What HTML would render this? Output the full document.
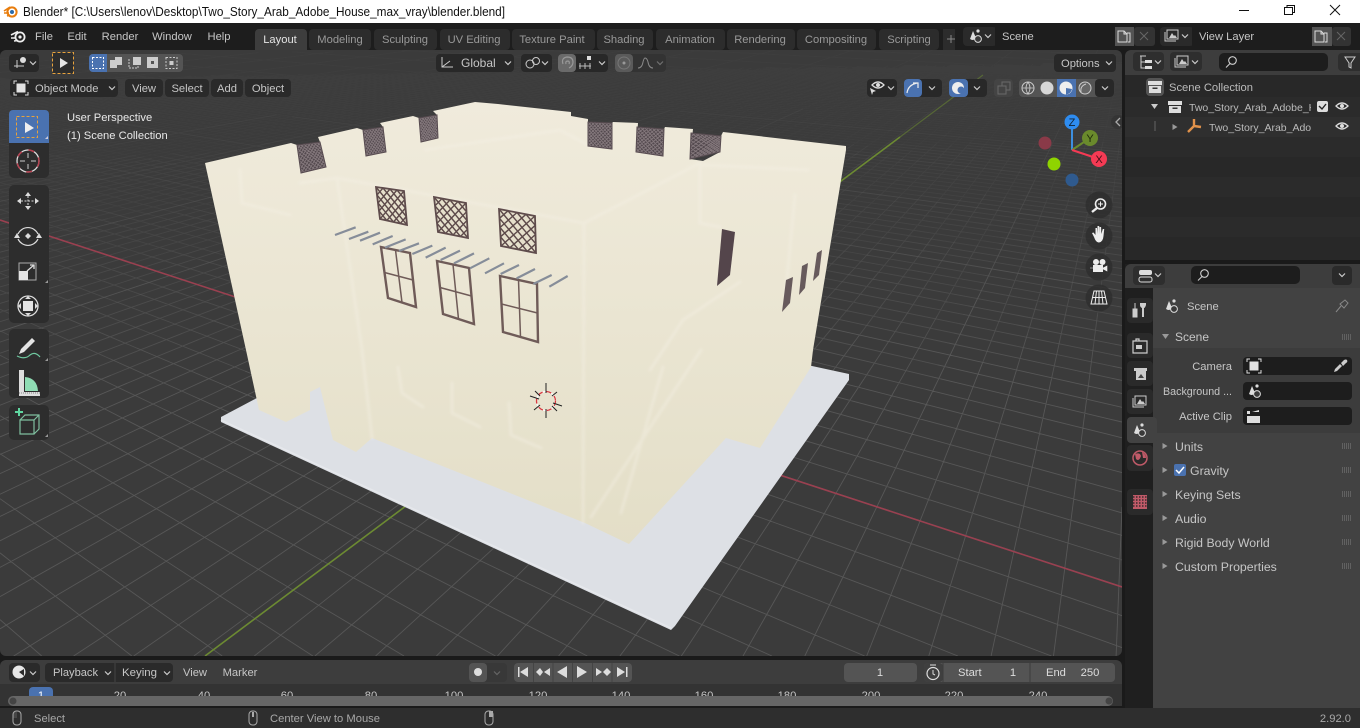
<!DOCTYPE html>
<html><head><meta charset="utf-8"><title>Blender</title>
<style>
html,body{margin:0;padding:0;width:1360px;height:728px;background:#1a1a1a;overflow:hidden}
svg{display:block;position:absolute;left:0;top:0;overflow:hidden}
text{font-family:"Liberation Sans",sans-serif;font-size:11.2px;fill:#c6c6c6}
.p{font-size:12.3px}
.m{text-anchor:middle}.e{text-anchor:end}
.d{fill:#999}
</style></head><body>
<svg width="1360" height="728" viewBox="0 0 1360 728" xmlns="http://www.w3.org/2000/svg">
<defs>
<clipPath id="vp"><rect x="0" y="50" width="1122" height="606" rx="6"/></clipPath>
<clipPath id="ol"><rect x="1125" y="50" width="186" height="210"/></clipPath>
<clipPath id="tl"><rect x="0" y="684" width="1122" height="24"/></clipPath>
<linearGradient id="wall" x1="0" y1="100" x2="0" y2="545" gradientUnits="userSpaceOnUse"><stop offset="0" stop-color="#f0ebdc"/><stop offset=".5" stop-color="#eae5d2"/><stop offset="1" stop-color="#e3dec7"/></linearGradient>
<filter id="bl" x="-10%" y="-10%" width="120%" height="120%"><feGaussianBlur stdDeviation="1.2"/></filter>
<g id="chev"><path d="M-3,-1.5L0,1.5L3,-1.5" fill="none" stroke="#ccc" stroke-width="1.2"/></g>
<g id="sc"><path d="M-6,3L-3,-5L0,2Q-1,4-4,4Z" fill="#ddd"/><circle cx="2" cy="-5" r="1.6" fill="#ddd"/><circle cx="2" cy="3" r="3.4" fill="#3a3a3a" stroke="#ddd" stroke-width="1"/></g>
<g id="vl"><path d="M-5,-6H6V3H-5Z" fill="none" stroke="#ccc"/><path d="M-7,-4V5H4" fill="none" stroke="#ccc"/><path d="M-3,2L0,-3L2,0L3,-1L5,2Z" fill="#ccc"/></g>
<g id="obj"><path d="M-7,-4V-7H-4M4,-7H7V-4M7,4V7H4M-4,7H-7V4" fill="none" stroke="#ddd"/><rect x="-4.5" y="-4.5" width="9" height="9" fill="#e2e2e2"/></g>
<g id="box"><rect x="-7" y="-6" width="14" height="4" fill="#ddd"/><path d="M-6,-1H6V6H-6Z" fill="#ddd"/><rect x="-2.5" y="0.5" width="5" height="1.5" fill="#333"/></g>
<g id="eye"><path d="M-6,0Q0,-6 6,0Q0,6-6,0Z" fill="none" stroke="#ddd" stroke-width="1.3"/><circle r="2" fill="#ddd"/></g>
<g id="srch"><circle cx="1.5" cy="-1.5" r="3.8" fill="none" stroke="#ccc" stroke-width="1.1"/><path d="M-1,1.5L-5,5.5" stroke="#ccc" stroke-width="1.1"/></g>
<g id="tri"><path d="M-2.5,-3L2.5,0L-2.5,3Z" fill="#999"/></g>
<g id="grip"><path d="M0,-2h9M0,0h9M0,2h9" stroke="#808080" stroke-width="1" stroke-dasharray="1 1"/></g>
<g id="mouse"><rect x="-4" y="-7" width="8" height="14" rx="3.5" fill="none" stroke="#aaa"/></g>
<g id="copy"><path d="M-6,-5h6l3,3v8h-9zM0,-5v3h3M3,-3h3v9h-2" fill="none" stroke="#ddd"/></g>
</defs>

<rect width="1360" height="728" fill="#1a1a1a"/>
<!-- title bar -->
<rect width="1360" height="23" fill="#fff"/>
<g transform="translate(11,12)"><circle cx="1" r="4.6" fill="none" stroke="#e87d0d" stroke-width="2"/><circle cx="1" r="2" fill="#2b6bab"/><path d="M-7,-1L-1,-5M-7,1H-2M-4,4L-1,3" stroke="#e87d0d" stroke-width="1.6"/></g>
<text x="23" y="16" style="fill:#111;font-size:12.5px" textLength="482" lengthAdjust="spacingAndGlyphs">Blender* [C:\Users\lenov\Desktop\Two_Story_Arab_Adobe_House_max_vray\blender.blend]</text>
<path d="M1239,10.5H1249" stroke="#111"/>
<path d="M1284.5,7.5H1292.5V14.5H1284.5ZM1287,7.5V5.5H1294.5V12.5H1292.5" fill="none" stroke="#111"/>
<path d="M1330,5L1340,15M1340,5L1330,15" stroke="#111"/>

<!-- top bar -->
<rect y="23" width="1360" height="27" fill="#1d1d1d"/>
<g transform="translate(19,37)"><circle cx="1" r="4.6" fill="none" stroke="#eee" stroke-width="1.8"/><circle cx="1" r="1.6" fill="#eee"/><path d="M-8,-2L-1,-5.5M-8,1H-3M-5,4L-1,3.5" stroke="#eee" stroke-width="1.6"/></g>
<text x="44" y="40" class="m">File</text><text x="77" y="40" class="m">Edit</text><text x="120" y="40" class="m">Render</text><text x="172" y="40" class="m">Window</text><text x="219" y="40" class="m">Help</text>
<path d="M255,33a4,4 0 0 1 4,-4h44a4,4 0 0 1 4,4v17h-52z" fill="#3d3d3d"/>
<g fill="#2c2c2c">
<rect x="309" y="29" width="62" height="21" rx="4"/><rect x="374" y="29" width="63" height="21" rx="4"/><rect x="440" y="29" width="70" height="21" rx="4"/><rect x="512" y="29" width="83" height="21" rx="4"/><rect x="597" y="29" width="56" height="21" rx="4"/><rect x="656" y="29" width="69" height="21" rx="4"/><rect x="727" y="29" width="68" height="21" rx="4"/><rect x="797" y="29" width="79" height="21" rx="4"/><rect x="879" y="29" width="60" height="21" rx="4"/><rect x="943" y="29" width="12" height="21"/>
</g>
<text x="280" y="43" class="m" style="fill:#e4e4e4">Layout</text>
<text x="340" y="43" class="m d">Modeling</text><text x="405" y="43" class="m d">Sculpting</text><text x="474" y="43" class="m d">UV Editing</text><text x="552" y="43" class="m d">Texture Paint</text><text x="624" y="43" class="m d">Shading</text><text x="690" y="43" class="m d">Animation</text><text x="760" y="43" class="m d">Rendering</text><text x="836" y="43" class="m d">Compositing</text><text x="909" y="43" class="m d">Scripting</text>
<path d="M947,39h8M951,35v8" stroke="#888"/>
<!-- scene selector -->
<rect x="963" y="27" width="34" height="19" rx="4" fill="#2a2a2a"/><use href="#sc" x="976" y="36"/><use href="#chev" x="988" y="36"/>
<rect x="995" y="27" width="120" height="19" fill="#1d1d1d"/><text x="1002" y="40">Scene</text>
<rect x="1115" y="27" width="19" height="19" fill="#545454"/><rect x="1134" y="27" width="21" height="19" rx="3" fill="#333"/>
<use href="#copy" x="1124" y="36"/><path d="M1140,32l8,8m0,-8l-8,8" stroke="#666"/>
<rect x="1160" y="27" width="34" height="19" rx="4" fill="#2a2a2a"/><use href="#vl" x="1172" y="36"/><use href="#chev" x="1185" y="36"/>
<rect x="1192" y="27" width="120" height="19" fill="#1d1d1d"/><text x="1199" y="40">View Layer</text>
<rect x="1312" y="27" width="20" height="19" fill="#545454"/><rect x="1332" y="27" width="19" height="19" rx="3" fill="#333"/>
<use href="#copy" x="1321" y="36"/><path d="M1337,32l8,8m0,-8l-8,8" stroke="#666"/>

<!-- viewport -->
<g clip-path="url(#vp)">
<rect x="0" y="50" width="1122" height="606" fill="#3b3b3b"/>
<g id="grid" fill="none" stroke="#575757" stroke-width=".9"></g>
<path d="M0,220L1122,587" stroke="#9a4050" stroke-width="1.6"/>
<path d="M205,656L900,137" stroke="#6c8a32" stroke-width="1.6"/><path d="M900,137L983,75" stroke="#6c8a32" stroke-width="1.2" opacity=".55"/>
<!-- plate -->
<path d="M221,417L221,422L671,630L675,626L849,380L849,374L812,366L400,300L257,398Z" fill="#dde0e5"/>
<path d="M221,420L671,628" stroke="#e6e8ec" stroke-width="1.5"/>
<!-- house -->
<path id="hs" fill="url(#wall)" d="M205,163L291,143L297,145L301,173L326,167L320,142L318,137L357,128L363,130L366,156L386,152L383,127L380,123L413,116L419,118L421,142L438,138L437,115L433,111L475,102L498,104L571,112L571,116L588,119L588,146L612,149L612,123L613,122L638,123L636,152L663,156L664,129L665,127L693,129L690,159L703,161L720,152L721,136L723,132L846,146L846,150L813,350L811,367L760,448L726,438L629,544L585,523L372,438L356,452L333,440L320,387L310,392L310,410L286,422L259,410L246,350Z"/>
<g fill="none" stroke="#f5f1e6" stroke-width="3" stroke-linecap="round" filter="url(#bl)" opacity=".4">
<path d="M240,170L242,203L290,215"/><path d="M300,183L337,178L584,223"/><path d="M337,178L362,350L372,438"/>
<path d="M584,223L583,523"/><path d="M584,223L700,163"/><path d="M700,163L700,223L720,227"/><path d="M703,165L808,170"/>
<path d="M398,367L402,393L423,407"/><path d="M452,383L452,413L480,427"/><path d="M509,403L511,435L541,448"/>
<path d="M701,350L591,517"/><path d="M663,367L621,513"/><path d="M740,282L683,320L650,370"/><path d="M795,195L785,300"/>
<path d="M425,150L560,130L590,146"/>
</g>
<g id="detail"></g>
<!-- right windows -->
<path d="M722,229L735,232L730,275L717,286Z" fill="#54454b"/>
<path d="M786,280L793,277L790,303L782,312Z" fill="#675a5c"/><path d="M802,266L808,263L805,288L799,295Z" fill="#675a5c"/><path d="M817,253L822,250L819,275L813,281Z" fill="#675a5c"/>
<!-- 3d cursor -->
<circle cx="546" cy="401" r="9.5" fill="none" stroke="#fff" stroke-width="1.2"/>
<circle cx="546" cy="401" r="9.5" fill="none" stroke="#d8383f" stroke-width="1.3" stroke-dasharray="5 4"/>
<path d="M546,383V393M546,409V418M530,396L539,399M553,403L562,406M535,391L540,396M552,406L557,411M534,410L540,405M552,396L557,392" stroke="#222" stroke-width="1"/>
<!-- gizmo -->
<circle cx="1045" cy="143" r="6.5" fill="#8a3a48"/><circle cx="1054" cy="164" r="6.5" fill="#8fd400"/><circle cx="1072" cy="180" r="6.5" fill="#2f5a8e"/>
<path d="M1072,150V125" stroke="#3d8fe0" stroke-width="2"/><path d="M1072,150L1090,138" stroke="#6a8a2c" stroke-width="2"/><path d="M1072,150L1099,159" stroke="#f53a54" stroke-width="2"/>
<circle cx="1072" cy="122" r="7.5" fill="#2e8cf0"/><circle cx="1090" cy="138" r="8" fill="#6a8a2c"/><circle cx="1099" cy="159" r="8" fill="#f53a54"/>
<text x="1072" y="126" class="m" style="fill:#123;font-size:11px">Z</text><text x="1090" y="142" class="m" style="fill:#1d2a08;font-size:11px">Y</text><text x="1099" y="163" class="m" style="fill:#401018;font-size:11px">X</text>
<!-- nav -->
<g fill="#2f2f2f" opacity=".85"><circle cx="1099" cy="205" r="13.5"/><circle cx="1099" cy="236" r="13.5"/><circle cx="1099" cy="267" r="13.5"/><circle cx="1099" cy="298" r="13.5"/></g>
<circle cx="1100.5" cy="204" r="5" fill="none" stroke="#eee" stroke-width="1.6"/><path d="M1097,208L1092,212" stroke="#eee" stroke-width="2.4"/><path d="M1098,204h5M1100.5,201.500v5" stroke="#eee"/>
<path d="M1094,237l-2,-4l1.500,-.5l2,2.500v-7h1.500l.5,6v-8h1.700l.3,8v-7h1.600l.2,7l1.500,-5h1.400l-.7,7q-.5,6 -4.500,6.500q-3,.3 -5,-5.500z" fill="#eee"/>
<circle cx="1096" cy="262" r="3" fill="#eee"/><circle cx="1102.500" cy="262" r="3" fill="#eee"/><rect x="1093" y="265" width="10" height="7" fill="#eee"/><path d="M1103,268l4,-2v5l-4,-2zM1093,268h-3" fill="#eee" stroke="#eee" stroke-width=".6"/>
<path d="M1094,291H1104L1107,304H1091ZM1099,291V304M1092.500,297.500H1105.500M1096.500,291L1095,304M1101.500,291L1103,304" fill="none" stroke="#eee"/>
<circle cx="1118" cy="122" r="7" fill="#333" opacity=".8"/><path d="M1120,118L1116,122L1120,126" fill="none" stroke="#aaa" stroke-width="1.3"/>
<!-- header row 1 -->
<rect x="9" y="54" width="30" height="18" rx="4" fill="#282828"/>
<path d="M14,66h10M17,60v8" stroke="#ccc"/><circle cx="23" cy="60" r="3" fill="#ddd"/><use href="#chev" x="33" y="63"/>
<rect x="52.500" y="52.500" width="21" height="21" fill="#2d2d2d" stroke="#e8a33d" stroke-dasharray="3 2"/><path d="M60,58L68,63L60,68Z" fill="#e6e6e6"/>
<rect x="89" y="54" width="94" height="18" rx="4" fill="#545454"/><path d="M93,54h14v18h-14a4,4 0 0 1 -4,-4v-10a4,4 0 0 1 4,-4z" fill="#4a72b0"/>
<rect x="92.500" y="57.500" width="11" height="11" fill="none" stroke="#fff" stroke-dasharray="2 1.500"/>
<path d="M110,60h5v-3h7v8h-5v3h-7z" fill="#ccc"/>
<path d="M129,59v9h9v-9" fill="none" stroke="#ccc" stroke-dasharray="2 1"/><rect x="133" y="57" width="8" height="8" fill="#ccc"/>
<path d="M147,57h11v11h-11zM151,61v3h3v-3z" fill="#ccc" fill-rule="evenodd"/>
<rect x="166" y="57.500" width="11" height="11" fill="none" stroke="#ccc" stroke-dasharray="2 1.500"/><rect x="169.500" y="61" width="4" height="4" fill="#ccc"/>
<rect x="436" y="54" width="78" height="18" rx="4" fill="#282828"/><path d="M442,57V67H453M442,67L450,61" fill="none" stroke="#ccc"/><text x="461" y="67" style="font-size:12px">Global</text><use href="#chev" x="508" y="63"/>
<rect x="521" y="54" width="31" height="18" rx="4" fill="#282828"/><circle cx="530" cy="64" r="4" fill="none" stroke="#ccc"/><circle cx="536" cy="61" r="3.5" fill="none" stroke="#ccc"/><use href="#chev" x="545" y="63"/>
<rect x="558" y="54" width="50" height="18" rx="4" fill="#282828"/><rect x="558" y="54" width="18" height="18" rx="4" fill="#6a6a6a"/>
<path d="M563,64q-2,-6 4,-7q6,0 6,5q0,4 -4,6M566,64q-1,-3 2,-3q2,.5 1,3" fill="none" stroke="#999" stroke-width="1.200"/>
<path d="M579,66h12M580,63v6M585,63v6M590,63v6" stroke="#bbb"/><rect x="587" y="56" width="4" height="4" fill="#ddd"/><use href="#chev" x="602" y="63"/>
<rect x="615" y="54" width="51" height="18" rx="4" fill="#333"/><rect x="615" y="54" width="18" height="18" rx="4" fill="#5a5a5a"/><circle cx="624" cy="63" r="6" fill="none" stroke="#777"/><circle cx="624" cy="63" r="1.500" fill="#999"/><path d="M638,68q4,0 5,-6q1,-4 2,-4q2,0 3,4q1,6 5,6" fill="none" stroke="#888"/><use href="#chev" x="660" y="63" opacity=".4"/>
<rect x="1054" y="54" width="62" height="18" rx="4" fill="#282828"/><text x="1061" y="67">Options</text><use href="#chev" x="1109" y="63"/>
<!-- header row 2 -->
<rect x="10" y="79" width="108" height="18" rx="4" fill="#282828"/><use href="#obj" x="21" y="88"/><text x="35" y="92">Object Mode</text><use href="#chev" x="112" y="88"/>
<rect x="125" y="79" width="38" height="18" rx="4" fill="#2a2a2a"/><text x="144" y="92" class="m">View</text>
<rect x="165" y="79" width="44" height="18" rx="4" fill="#2a2a2a"/><text x="187" y="92" class="m">Select</text>
<rect x="211" y="79" width="32" height="18" rx="4" fill="#2a2a2a"/><text x="227" y="92" class="m">Add</text>
<rect x="245" y="79" width="46" height="18" rx="4" fill="#2a2a2a"/><text x="268" y="92" class="m">Object</text>
<rect x="867" y="79" width="30" height="18" rx="4" fill="#282828"/><use href="#eye" x="878" y="85"/><path d="M870,88l6,3l-3,1l-1,3z" fill="#ddd"/><use href="#chev" x="891" y="88"/>
<rect x="904" y="79" width="38" height="18" rx="4" fill="#282828"/><rect x="904" y="79" width="18" height="18" rx="4" fill="#4a72b0"/><path d="M907,93q1,-8 10,-10M913,83h5v5" fill="none" stroke="#eee" stroke-width="1.200"/><use href="#chev" x="932" y="88"/>
<rect x="949" y="79" width="38" height="18" rx="4" fill="#282828"/><rect x="949" y="79" width="19" height="18" rx="4" fill="#4a72b0"/><circle cx="958" cy="88" r="6" fill="#eee"/><circle cx="961" cy="90" r="3.500" fill="#4a72b0"/><use href="#chev" x="977" y="88"/>
<rect x="994" y="79" width="19" height="18" rx="4" fill="#444"/><path d="M998,86h8v8h-8zM1002,86v-4h8v8h-4" fill="none" stroke="#6a6a6a"/>
<rect x="1019" y="79" width="95" height="18" rx="4" fill="#545454"/><rect x="1057" y="79" width="19" height="18" fill="#4a72b0"/><rect x="1095" y="79" width="19" height="18" rx="4" fill="#282828"/>
<circle cx="1028" cy="88" r="6" fill="none" stroke="#ccc"/><path d="M1022,88h12M1028,82q-4,6 0,12q4,-6 0,-12" fill="none" stroke="#ccc" stroke-width=".8"/>
<circle cx="1047" cy="88" r="6.500" fill="#d6d6d6"/>
<circle cx="1066" cy="88" r="6.500" fill="#eee"/><path d="M1066,88l6,1a6.500,6.500 0 0 1 -6,5.500z" fill="#4a72b0"/>
<circle cx="1085" cy="88" r="6" fill="#666" stroke="#ccc"/><path d="M1081,92q-1,-6 5,-8" fill="none" stroke="#ccc"/><use href="#chev" x="1105" y="88"/>
<!-- tool panel -->
<rect x="9" y="110" width="40" height="68" rx="5" fill="#2d2d2d"/><rect x="9" y="185" width="40" height="138" rx="5" fill="#2d2d2d"/><rect x="9" y="329" width="40" height="69" rx="5" fill="#2d2d2d"/><rect x="9" y="405" width="40" height="35" rx="5" fill="#2d2d2d"/>
<path d="M13,110h32a4,4 0 0 1 4,4v29h-40v-29a4,4 0 0 1 4,-4z" fill="#4a72b0"/>
<rect x="16.500" y="116.500" width="21" height="21" fill="none" stroke="#e8a33d" stroke-dasharray="3 2"/><path d="M25,122L34,128L25,133Z" fill="#eee"/><path d="M45,139l3,0v-3z" fill="#ccd"/>
<circle cx="28" cy="161" r="11" fill="none" stroke="#ddd" stroke-width="1.300"/><circle cx="28" cy="161" r="11" fill="none" stroke="#b84050" stroke-width="1.400" stroke-dasharray="6 7"/><path d="M28,153v5M28,164v5M20,161h5M31,161h5" stroke="#ccc"/>
<path d="M28,192l3,4h-6zM28,210l3,-4h-6zM17,201l4,-3v6zM39,201l-4,-3v6z" fill="#ddd"/><path d="M28,196v10M21,201h14" stroke="#ddd" stroke-dasharray="2 1.500"/>
<path d="M18,234a11,11 0 0 1 20,0M18,239a11,11 0 0 0 20,0" fill="none" stroke="#ddd" stroke-width="1.200"/><path d="M28,233l3,3l-3,3l-3,-3zM17,233l3,5h-6zM39,233l3,5h-6z" fill="#ddd"/>
<rect x="19" y="263" width="17" height="17" fill="none" stroke="#aaa"/><rect x="19" y="271" width="9" height="9" fill="#e4e4e4"/><path d="M27,271l7,-6M30,265h4v4" fill="none" stroke="#ddd" stroke-width="1.300"/><path d="M45,283l3,0v-3z" fill="#999"/>
<circle cx="28" cy="306" r="10" fill="none" stroke="#ddd" stroke-width="1.300"/><rect x="23" y="301" width="10" height="10" fill="#e4e4e4"/><path d="M28,296l3,3h-6zM28,316l3,-3h-6zM18,306l3,-3v6zM38,306l-3,-3v6z" fill="#ddd"/>
<path d="M21,349l11,-11l3,3l-11,11l-5,2z" fill="#e4e4e4"/><path d="M17,356q8,4 13,-1q5,-4 10,2" fill="none" stroke="#6fc9a0" stroke-width="1.200"/><path d="M45,361l3,0v-3z" fill="#999"/>
<path d="M19,370h5v22h16v4h-21z" fill="#ddd"/><path d="M25,391v-14q12,1 13,14z" fill="#8fdcb4"/><path d="M19,393h21" stroke="#888" stroke-dasharray="1 1"/>
<path d="M20,420h14v14h-14zM20,420l5,-5h14v14l-5,5M34,420l5,-5" fill="none" stroke="#7fbf9f" stroke-width="1.200"/><path d="M15,412h8M19,408v8" stroke="#5fd6a0" stroke-width="2"/><path d="M45,437l3,0v-3z" fill="#999"/>
<text x="67" y="121" style="fill:#e8e8e8">User Perspective</text><text x="67" y="139" style="fill:#e8e8e8">(1) Scene Collection</text>
</g>

<!-- outliner -->
<path d="M1125,56a6,6 0 0 1 6,-6H1360V75H1125Z" fill="#3d3d3d"/>
<rect x="1125" y="75" width="235" height="185" fill="#282828"/>
<g fill="#2b2b2b"><rect x="1125" y="97" width="235" height="20"/><rect x="1125" y="137" width="235" height="20"/><rect x="1125" y="177" width="235" height="20"/><rect x="1125" y="217" width="235" height="20"/></g>
<rect x="1125" y="117" width="235" height="20" fill="#2f2f2f"/>
<rect x="1133" y="52" width="31" height="19" rx="4" fill="#2e2e2e"/><path d="M1140,56h6M1141,56v12h4M1141,62h4" fill="none" stroke="#ccc"/><rect x="1145" y="60" width="7" height="3" fill="#ddd"/><rect x="1145" y="66" width="7" height="3" fill="#ddd"/><use href="#chev" x="1158" y="62"/>
<rect x="1170" y="52" width="32" height="19" rx="4" fill="#2e2e2e"/><use href="#vl" x="1182" y="62"/><use href="#chev" x="1195" y="62"/>
<rect x="1219" y="53" width="109" height="18" rx="5" fill="#1d1d1d"/><use href="#srch" x="1231" y="62"/>
<path d="M1338,57a4,4 0 0 1 4,-4h18v18h-18a4,4 0 0 1 -4,-4z" fill="#2e2e2e"/><path d="M1345,57h10l-4,6v5l-2,-1v-4z" fill="none" stroke="#ccc"/>
<rect x="1146" y="78" width="18" height="18" rx="4" fill="#545454"/><use href="#box" x="1155" y="87"/>
<text x="1169" y="91" style="fill:#bbb">Scene Collection</text>
<path d="M1151,104h7l-3.500,5z" fill="#ccc"/><use href="#box" x="1175" y="107"/>
<g clip-path="url(#ol)"><text x="1189" y="111" style="fill:#bbb;font-size:10.5px">Two_Story_Arab_Adobe_House</text><text x="1209" y="131" style="fill:#bbb;font-size:10.5px">Two_Story_Arab_Adobe_House</text></g>
<rect x="1317" y="101" width="11" height="11" rx="2" fill="#ddd"/><path d="M1319,106l3,3l4,-5" fill="none" stroke="#222" stroke-width="1.400"/>
<use href="#eye" x="1342" y="106"/><use href="#eye" x="1342" y="126"/>
<path d="M1155,121v10" stroke="#666"/><use href="#tri" x="1175" y="127"/>
<path d="M1194,119v7l-6,6M1194,126l7,1" fill="none" stroke="#e0914a" stroke-width="2.400"/>

<!-- properties -->
<rect x="1125" y="264" width="235" height="444" fill="#1f1f1f"/>
<path d="M1125,270a6,6 0 0 1 6,-6H1360V288H1125Z" fill="#3d3d3d"/>
<rect x="1153" y="288" width="207" height="420" fill="#424242"/>
<rect x="1153" y="348" width="207" height="85" fill="#3c3c3c"/>
<rect x="1133" y="266" width="32" height="19" rx="4" fill="#2e2e2e"/><rect x="1139" y="270" width="13" height="5" rx="2" fill="#ddd"/><rect x="1139" y="277" width="13" height="5" rx="2" fill="none" stroke="#ddd"/><use href="#chev" x="1158" y="275"/>
<rect x="1191" y="266" width="109" height="18" rx="5" fill="#1d1d1d"/><use href="#srch" x="1203" y="275"/>
<rect x="1332" y="266" width="20" height="19" rx="4" fill="#2a2a2a"/><use href="#chev" x="1342" y="275"/>
<!-- tabs -->
<g fill="#2a2a2a"><rect x="1127" y="298" width="26" height="25" rx="4"/><rect x="1127" y="333" width="26" height="25" rx="4"/><rect x="1127" y="361" width="26" height="25" rx="4"/><rect x="1127" y="389" width="26" height="25" rx="4"/><rect x="1127" y="445" width="26" height="26" rx="4"/><rect x="1127" y="489" width="26" height="26" rx="4"/></g>
<rect x="1127" y="417" width="30" height="26" rx="4" fill="#424242"/>
<path d="M1135,303v6M1133,309h4v8h-4z" fill="#ccc" stroke="#ccc" stroke-width="1"/><path d="M1146,303v2q-1,3 -2,3v9h-2v-9q-2,-1 -2,-3v-2" fill="#ccc"/>
<path d="M1133,341h14v12h-14zM1136,341v-2h3v2" fill="none" stroke="#ccc" stroke-width="1.200"/><rect x="1136" y="345" width="6" height="4" fill="#ccc"/>
<path d="M1134,368h13v3h-13zM1136,371h10v9h-10z" fill="#ccc"/><path d="M1138,378l3,-4l3,4z" fill="#444"/>
<use href="#vl" x="1140" y="402"/><use href="#sc" x="1140" y="430"/>
<circle cx="1140" cy="458" r="7" fill="none" stroke="#c05a68" stroke-width="1.500"/><path d="M1135,454q5,-2 6,2q-2,6 -5,3zM1142,452q4,2 4,6l-3,0z" fill="#c05a68"/>
<rect x="1133" y="495" width="14" height="14" fill="#c05a68"/><path d="M1133,497h14M1133,500h14M1133,503h14M1133,506h14" stroke="#3a2a2d" stroke-width="1.500" stroke-dasharray="1.500 1.500"/>
<use href="#sc" x="1172" y="306"/><text x="1187" y="310">Scene</text>
<path d="M1340,304l5,-4l3,3l-4,5zM1341,306l-5,6" fill="none" stroke="#888"/>
<path d="M1162,334h7l-3.500,5z" fill="#999"/><text x="1175" y="341" style="font-size:12px">Scene</text><use href="#grip" x="1342" y="337"/>
<text x="1232" y="370" class="e">Camera</text><text x="1232" y="395" class="e" textLength="69" lengthAdjust="spacingAndGlyphs">Background ...</text><text x="1232" y="420" class="e">Active Clip</text>
<rect x="1243" y="357" width="109" height="18" rx="4" fill="#1d1d1d"/><rect x="1243" y="382" width="109" height="18" rx="4" fill="#1d1d1d"/><rect x="1243" y="407" width="109" height="18" rx="4" fill="#1d1d1d"/>
<use href="#obj" x="1254" y="366"/><path d="M1334,372l1,-3l5,-5l2,2l-5,5zM1341,363l3,-3q2,-1 3,0q1,2 -1,3l-3,3z" fill="#ccc"/>
<use href="#sc" x="1255" y="391"/>
<rect x="1247" y="416" width="13" height="7" fill="#ddd"/><path d="M1247,411v3h3v-3zM1252,412l7,-2v2h-7z" fill="#ddd"/>
<use href="#tri" x="1165" y="446"/><use href="#tri" x="1165" y="470"/><use href="#tri" x="1165" y="494"/><use href="#tri" x="1165" y="518"/><use href="#tri" x="1165" y="542"/><use href="#tri" x="1165" y="566"/>
<text x="1175" y="451" class="p">Units</text>
<rect x="1174" y="464" width="12" height="12" rx="2" fill="#4a72b0"/><path d="M1176,470l3,3l5,-6" fill="none" stroke="#fff" stroke-width="1.500"/><text x="1190" y="475" class="p">Gravity</text>
<text x="1175" y="499" class="p">Keying Sets</text><text x="1175" y="523" class="p">Audio</text><text x="1175" y="547" class="p">Rigid Body World</text><text x="1175" y="571" class="p">Custom Properties</text>
<use href="#grip" x="1342" y="446"/><use href="#grip" x="1342" y="470"/><use href="#grip" x="1342" y="494"/><use href="#grip" x="1342" y="518"/><use href="#grip" x="1342" y="542"/><use href="#grip" x="1342" y="566"/>

<!-- timeline -->
<path d="M0,666a6,6 0 0 1 6,-6H1116a6,6 0 0 1 6,6V684H0Z" fill="#3d3d3d"/>
<rect y="684" width="1122" height="24" fill="#333"/>
<rect x="9" y="663" width="31" height="19" rx="4" fill="#2a2a2a"/><circle cx="19" cy="672" r="6.500" fill="#e6e6e6"/><path d="M19,672l5,-3v7z" fill="#2a2a2a"/><use href="#chev" x="33" y="673"/>
<rect x="45" y="663" width="128" height="19" rx="4" fill="#2a2a2a"/><path d="M115,663v19" stroke="#444"/>
<text x="53" y="676" textLength="45" lengthAdjust="spacingAndGlyphs">Playback</text><use href="#chev" x="108" y="673"/>
<text x="122" y="676" textLength="35" lengthAdjust="spacingAndGlyphs">Keying</text><use href="#chev" x="167" y="673"/>
<text x="195" y="676" class="m">View</text><text x="240" y="676" class="m">Marker</text>
<rect x="469" y="663" width="38" height="19" rx="4" fill="#383838"/><rect x="469" y="663" width="18" height="19" rx="4" fill="#545454"/><circle cx="478" cy="672" r="4" fill="#ddd"/><use href="#chev" x="497" y="673" opacity=".3"/>
<rect x="514" y="663" width="118" height="19" rx="4" fill="#545454"/>
<path d="M533.500,663v19M553,663v19M572.500,663v19M592.500,663v19M612,663v19" stroke="#444"/>
<path d="M518,667v10h1.500v-10zM528,667l-8,5l8,5z" fill="#ddd"/>
<path d="M536,672l4,-4l3,4l-3,4zM544,672l6,-4v8z" fill="#ddd"/>
<path d="M567,666v12l-10,-6z" fill="#ddd"/><path d="M577,666v12l10,-6z" fill="#ddd"/>
<path d="M596,668v8l6,-4zM603,672l4,-4l4,4l-4,4z" fill="#ddd"/>
<path d="M617,667l8,5l-8,5zM626,667h1.500v10h-1.500z" fill="#ddd"/>
<rect x="844" y="663" width="73" height="19" rx="4" fill="#545454"/><text x="880" y="676" class="m" style="fill:#ddd">1</text>
<rect x="924" y="663" width="191" height="19" rx="4" fill="#545454"/><rect x="924" y="663" width="19" height="19" rx="4" fill="#3f3f3f"/>
<path d="M1030,663v19M943,663v19" stroke="#3d3d3d"/>
<circle cx="933" cy="673.500" r="6" fill="none" stroke="#ddd" stroke-width="1.200"/><path d="M930,665h6M933,670v4l2,1" fill="none" stroke="#ddd"/>
<text x="958" y="676" style="fill:#ddd">Start</text><text x="1013" y="676" class="m" style="fill:#ddd">1</text>
<text x="1046" y="676" style="fill:#ddd">End</text><text x="1090" y="676" class="m" style="fill:#ddd">250</text>
<rect x="29" y="687" width="24" height="14" rx="4" fill="#4a72b0"/>
<g clip-path="url(#tl)">
<text x="41" y="699" class="m" style="fill:#fff">1</text>
<text x="120" y="699" class="m">20</text><text x="204" y="699" class="m">40</text><text x="287" y="699" class="m">60</text><text x="371" y="699" class="m">80</text><text x="454" y="699" class="m">100</text><text x="538" y="699" class="m">120</text><text x="621" y="699" class="m">140</text><text x="704" y="699" class="m">160</text><text x="787" y="699" class="m">180</text><text x="871" y="699" class="m">200</text><text x="954" y="699" class="m">220</text><text x="1038" y="699" class="m">240</text>
</g>
<rect x="8" y="696" width="1105" height="10" rx="5" fill="#666"/><circle cx="13" cy="701" r="3.500" fill="#444"/><circle cx="1109" cy="701" r="3.500" fill="#444"/>
<rect y="706" width="1122" height="2" fill="#1a1a1a"/>

<!-- status bar -->
<rect y="708" width="1360" height="20" fill="#2e2e2e"/>
<use href="#mouse" x="17" y="718"/><path d="M13,712h4v6h-4z" fill="#aaa" opacity=".2"/>
<text x="34" y="722" style="fill:#a8a8a8" textLength="31" lengthAdjust="spacingAndGlyphs">Select</text>
<use href="#mouse" x="253" y="718"/><rect x="252" y="712" width="2" height="5" fill="#aaa"/>
<text x="270" y="722" style="fill:#a8a8a8" textLength="110" lengthAdjust="spacingAndGlyphs">Center View to Mouse</text>
<use href="#mouse" x="489" y="718"/><path d="M489,711h4v6h-4z" fill="#aaa"/>
<text x="1351" y="722" class="e" style="fill:#a8a8a8">2.92.0</text>
</svg>
<script>
(function(){
var NS="http://www.w3.org/2000/svg";
function el(n,a,p){var e=document.createElementNS(NS,n);for(var k in a)e.setAttribute(k,a[k]);p.appendChild(e);return e;}
/* ground grid */
var O=[548,399],Vx=[-731,-19],Vy=[1144,-46],al=.0208,be=.03,s0=-.2046;
function P(s,t){var w=1+s+t;return [(s*Vx[0]+t*Vy[0]+O[0])/w,(s*Vx[1]+t*Vy[1]+O[1])/w,w];}
var buckets={};
/* clip a segment to the viewport so no geometry leaves the frame */
function clip(a,b){
 var t0=0,t1=1,dx=b[0]-a[0],dy=b[1]-a[1];
 var pp=[-dx,dx,-dy,dy],qq=[a[0],1122-a[0],a[1]-50,656-a[1]];
 for(var i=0;i<4;i++){
  if(pp[i]==0){if(qq[i]<0)return null;continue;}
  var r=qq[i]/pp[i];
  if(pp[i]<0){if(r>t1)return null;if(r>t0)t0=r;}
  else{if(r<t0)return null;if(r<t1)t1=r;}
 }
 return [[a[0]+t0*dx,a[1]+t0*dy],[a[0]+t1*dx,a[1]+t1*dy]];
}
function seg(a,b,op){
 var q=Math.round(Math.min(1,op)*8);if(q<1)return;
 var c=clip(a,b);if(!c)return;
 (buckets[q]=buckets[q]||[]).push("M"+c[0][0].toFixed(1)+","+c[0][1].toFixed(1)+"L"+c[1][0].toFixed(1)+","+c[1][1].toFixed(1));
}
function line(fn,major){
 var prev=null;
 for(var p=-1.2;p<7;p+=.1){
  var c=fn(p);
  if(c[2]<.12){prev=null;continue;}
  if(prev){var w=(c[2]+prev[2])/2;var op=1/(w*w);if(major)op*=1.6;seg(prev,c,op);}
  prev=c;
 }
}
var i,v;
for(i=-60;i<340;i++){v=s0+al*i;if(v<-1.1)continue;(function(v,i){line(function(p){return P(v,p);},i%10==0);})(v,i);}
for(i=-40;i<240;i++){v=be*i;(function(v,i){line(function(p){return P(p,v);},i%10==0);})(v,i);}
var g=document.getElementById("grid");
for(var q in buckets){el("path",{d:buckets[q].join(""),opacity:q/8},g);}

/* lattice helpers */
var det=document.getElementById("detail");
function bi(Q,u,v){var a=[Q[0][0]+(Q[1][0]-Q[0][0])*u,Q[0][1]+(Q[1][1]-Q[0][1])*u],b=[Q[3][0]+(Q[2][0]-Q[3][0])*u,Q[3][1]+(Q[2][1]-Q[3][1])*u];return [a[0]+(b[0]-a[0])*v,a[1]+(b[1]-a[1])*v];}
function pts(Q){return Q.map(function(p){return p.join(",")}).join(" ");}
function lattice(Q,n,col,w,fr,fw,parent){
 var d="",k,a,b;
 for(k=-n;k<=n;k++){
  var u0=k/n,u1=u0+1;
  var a1=Math.max(0,u0),b1=Math.min(1,u1);
  if(b1<=a1)continue;
  a=bi(Q,a1,a1-u0);b=bi(Q,b1,b1-u0);d+="M"+a[0].toFixed(1)+","+a[1].toFixed(1)+"L"+b[0].toFixed(1)+","+b[1].toFixed(1);
  a=bi(Q,a1,1-(a1-u0));b=bi(Q,b1,1-(b1-u0));d+="M"+a[0].toFixed(1)+","+a[1].toFixed(1)+"L"+b[0].toFixed(1)+","+b[1].toFixed(1);
 }
 el("path",{d:d,stroke:col,"stroke-width":w,fill:"none"},parent);
 el("polygon",{points:pts(Q),fill:"none",stroke:fr,"stroke-width":fw},parent);
}
/* notch windows */
[[[297,145],[320,142],[326,167],[301,173]],
 [[363,130],[383,127],[386,152],[366,156]],
 [[419,118],[437,115],[438,138],[421,142]],
 [[588,122],[612,123],[612,149],[588,146]],
 [[637,127],[664,129],[663,156],[636,152]],
 [[691,133],[721,136],[720,152],[690,159]]].forEach(function(Q){
 el("polygon",{points:pts(Q),fill:"#53494e"},det);
 lattice(Q,7,"#85797d",.9,"#574b50",1,det);
});
/* upper lattice windows */
[[[376,187],[404,191],[407,225],[380,219]],
 [[434,197],[466,203],[468,238],[438,232]],
 [[499,209],[535,216],[536,253],[501,246]]].forEach(function(Q){
 el("polygon",{points:pts(Q),fill:"#e6e0cc"},det);
 lattice(Q,4,"#5d4a4a",1.4,"#5f4c4c",1.8,det);
});
/* sash windows */
[[[381,247],[410,253],[416,307],[388,298]],
 [[437,261],[469,268],[474,324],[443,314]],
 [[500,276],[537,284],[538,342],[503,332]]].forEach(function(Q){
 el("polygon",{points:pts(Q),fill:"none",stroke:"#6f5b58","stroke-width":2.4},det);
 var a=bi(Q,.5,0),b=bi(Q,.5,1),c=bi(Q,0,.5),e=bi(Q,1,.5);
 el("path",{d:"M"+a+"L"+b+"M"+c+"L"+e,stroke:"#6f5b58","stroke-width":1.5,fill:"none"},det);
});
/* beams */
[[405,435,467,412],[447,447,505,425],[480,452,540,428],[518,463,578,438],[555,473,617,448],[597,483,657,460],[637,492,697,467],[677,503,737,473],[722,510,780,482],[762,520,822,490],[810,535,868,505],[855,550,912,520],[902,552,957,525],[950,565,1005,537],[1000,582,1055,555],[1048,590,1103,558]].forEach(function(b){
 el("line",{x1:200+b[0]/3,y1:90+b[1]/3,x2:200+b[2]/3,y2:90+b[3]/3,stroke:"#868d99","stroke-width":2.2},det);
});
})();
</script>
</body></html>
